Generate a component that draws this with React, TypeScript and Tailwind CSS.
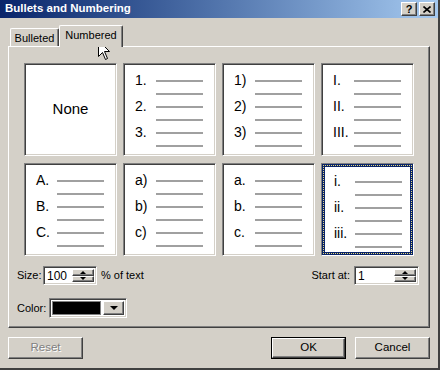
import React from "react";

const raised =
  "bg-[#d4d0c8] border border-t-white border-l-white border-r-[#404040] border-b-[#404040] shadow-[inset_-1px_-1px_0_#808080]";
const sunken =
  "border border-t-[#808080] border-l-[#808080] border-r-white border-b-white shadow-[inset_1px_1px_0_#404040,inset_-1px_-1px_0_#d4d0c8]";

type Cell = { labels: string[] | null; selected?: boolean };

const cells: Cell[] = [
  { labels: null },
  { labels: ["1.", "2.", "3."] },
  { labels: ["1)", "2)", "3)"] },
  { labels: ["I.", "II.", "III."] },
  { labels: ["A.", "B.", "C."] },
  { labels: ["a)", "b)", "c)"] },
  { labels: ["a.", "b.", "c."] },
  { labels: ["i.", "ii.", "iii."], selected: true },
];

function Lines({ labels }: { labels: string[] }) {
  return (
    <div className="flex flex-col">
      {[0, 1, 2, 3, 4, 5].map((i) => (
        <div key={i} className="flex h-[13px] items-center">
          <span className="w-[21px] text-[14px] leading-[13px] text-[#000000]">
            {i % 2 === 0 ? labels[i / 2] : ""}
          </span>
          <div className="h-[2px] w-[47px] bg-[#a0a0a0]" />
        </div>
      ))}
    </div>
  );
}

function GalleryCell({ cell }: { cell: Cell }) {
  if (cell.selected) {
    return (
      <div className="h-[93px] w-[93px] border border-t-[#808080] border-l-[#808080] border-r-white border-b-white">
        <div className="h-full w-full border border-[#0a246a] bg-[#0a246a]">
          <div className="h-full w-full border border-dotted border-[#e8dc78]">
            <div className="h-full w-full border border-[#0a246a] bg-white pl-[9px] pt-[8px]">
              <Lines labels={cell.labels!} />
            </div>
          </div>
        </div>
      </div>
    );
  }
  if (!cell.labels) {
    return (
      <div className={`flex h-[93px] w-[93px] items-center justify-center bg-white ${sunken}`}>
        <span className="text-[15px] text-black">None</span>
      </div>
    );
  }
  return (
    <div className={`h-[93px] w-[93px] bg-white pl-[11px] pt-[10px] ${sunken}`}>
      <Lines labels={cell.labels} />
    </div>
  );
}

function Spinner() {
  return (
    <div className="flex w-[22px] flex-col">
      <div className={`flex h-[8px] items-center justify-center ${raised}`}>
        <div className="h-0 w-0 border-x-[3px] border-b-[3px] border-x-transparent border-b-black" />
      </div>
      <div className={`flex h-[7px] items-center justify-center ${raised}`}>
        <div className="h-0 w-0 border-x-[3px] border-t-[3px] border-x-transparent border-t-black" />
      </div>
    </div>
  );
}

function NumberBox({ value, width }: { value: string; width: string }) {
  return (
    <div className={`flex h-[19px] ${width} bg-white p-[2px] ${sunken}`}>
      <div className="flex flex-1 items-center pl-[1px] text-[12px] text-black">{value}</div>
      <Spinner />
    </div>
  );
}

function Button({ label, disabled, isDefault }: { label: string; disabled?: boolean; isDefault?: boolean }) {
  const inner = (
    <div
      className={`flex h-full w-full items-center justify-center text-[11.5px] ${raised} ${
        disabled ? "text-[#808080] [text-shadow:1px_1px_0_#ffffff]" : "text-black"
      }`}
    >
      {label}
    </div>
  );
  return isDefault ? (
    <div className="h-[22px] w-[75px] border border-black">{inner}</div>
  ) : (
    <div className="h-[22px] w-[75px]">{inner}</div>
  );
}

export default function App() {
  return (
    <div
      className="relative flex h-[370px] w-[440px] flex-col bg-[#d4d0c8] border-r-2 border-b-2 border-r-[#404040] border-b-[#404040] text-[11px] text-black antialiased select-none"
      style={{ fontFamily: '"Liberation Sans", Arial, sans-serif' }}
    >
      {/* title bar */}
      <div className="flex h-[18px] items-center justify-between bg-gradient-to-r from-[#0a246a] to-[#a6caf0] pl-[5px] pr-[3px]">
        <span className="text-[11.5px] font-bold text-white">Bullets and Numbering</span>
        <div className="flex gap-[2px]">
          <div className={`flex h-[14px] w-[16px] items-center justify-center text-[11px] font-bold leading-none ${raised}`}>?</div>
          <div className={`flex h-[14px] w-[16px] items-center justify-center ${raised}`}>
            <svg width="8" height="7" viewBox="0 0 8 7">
              <path d="M0.5 0.5 L7.5 6.5 M7.5 0.5 L0.5 6.5" stroke="black" strokeWidth="1.6" />
            </svg>
          </div>
        </div>
      </div>

      <div className="flex flex-col px-[8px]">
        {/* tabs */}
        <div className="mt-[7px] flex h-[21px] items-end pl-[2px]">
          <div className="flex h-[18px] w-[49px] items-center justify-center rounded-t-[2px] border-l border-t border-r border-l-white border-t-white border-r-[#404040] pt-[1px] shadow-[inset_-1px_0_0_#808080] text-[11px]">
            Bulleted
          </div>
          <div className="relative z-10 -mb-px flex h-[22px] w-[64px] items-center justify-center rounded-t-[2px] border-l border-t border-r border-l-white border-t-white border-r-[#404040] bg-[#d4d0c8] pb-[3px] shadow-[inset_-1px_0_0_#808080] text-[11px]">
            Numbered
          </div>
        </div>

        {/* panel */}
        <div className="flex h-[282px] flex-col border border-t-white border-l-white border-r-[#404040] border-b-[#404040] pl-[8px] pr-[10px] pt-[16px] shadow-[inset_-1px_-1px_0_#808080]">
          <div className="ml-[7px] grid grid-cols-[93px_93px_93px_93px] gap-x-[6px] gap-y-[7px]">
            {cells.map((c, i) => (
              <GalleryCell key={i} cell={c} />
            ))}
          </div>

          <div className="mt-[10px] flex items-center justify-between">
            <div className="flex items-center">
              <span className="w-[26px]">Size:</span>
              <NumberBox value="100" width="w-[54px]" />
              <span className="ml-[4px]">% of text</span>
            </div>
            <div className="flex items-center">
              <span className="mr-[4px]">Start at:</span>
              <NumberBox value="1" width="w-[65px]" />
            </div>
          </div>

          <div className="mt-[13px] flex items-center">
            <span className="w-[32px]">Color:</span>
            <div className={`flex h-[20px] w-[78px] items-center gap-[2px] bg-white p-[2px] ${sunken}`}>
              <div className="h-full w-[49px] border border-[#808080] bg-black" />
              <div className={`flex h-full flex-1 items-center justify-center ${raised}`}>
                <div className="h-0 w-0 border-x-[4px] border-t-[4px] border-x-transparent border-t-black" />
              </div>
            </div>
          </div>
        </div>

        {/* buttons */}
        <div className="mt-[9px] flex items-center">
          <div className="w-[74px]">
            <Button label="Reset" disabled />
          </div>
          <div className="ml-auto flex gap-[9px]">
            <Button label="OK" isDefault />
            <Button label="Cancel" />
          </div>
        </div>
      </div>

      {/* mouse pointer over the tab */}
      <svg className="absolute left-[98px] top-[40px]" width="13" height="21" viewBox="0 0 13 21">
        <path
          d="M0.5 0.5 L0.5 16.5 L4.5 12.5 L7.5 19.5 L9.5 18.5 L6.5 11.5 L11.5 11.5 Z"
          fill="white"
          stroke="black"
          strokeWidth="1"
          strokeLinejoin="miter"
        />
      </svg>
    </div>
  );
}
